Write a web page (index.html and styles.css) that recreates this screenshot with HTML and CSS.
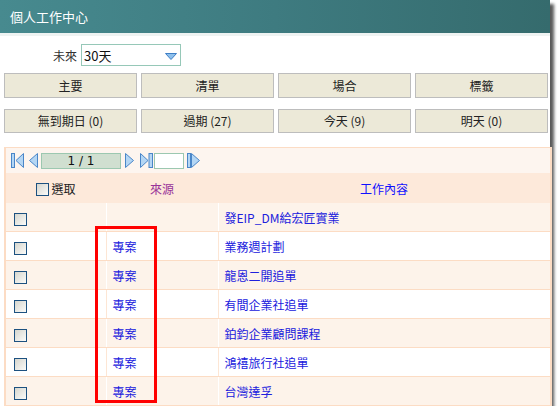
FILE: index.html
```html
<!DOCTYPE html>
<html lang="zh-Hant">
<head>
<meta charset="utf-8">
<link rel="stylesheet" href="styles.css">
</head>
<body>
<div class="panel">
  <div class="title">個人工作中心</div>
  <div class="strip"></div>
  <div class="filter">
    <span class="label">未來</span>
    <div class="select"><span>30天</span>
      <svg class="arrow" width="12" height="7" viewBox="0 0 12 7"><path d="M0.5 0.5 H11.5 L6 6.5 Z" fill="#8ec0ec" stroke="#3f7fc6" stroke-width="1"/></svg>
    </div>
  </div>
  <div class="btnrow r1">
    <div class="btn">主要</div><div class="btn">清單</div><div class="btn">場合</div><div class="btn">標籤</div>
  </div>
  <div class="btnrow r2">
    <div class="btn">無到期日 (0)</div><div class="btn">過期 (27)</div><div class="btn">今天 (9)</div><div class="btn">明天 (0)</div>
  </div>
  <table class="grid">
    <colgroup><col class="w1"><col class="w2"><col class="w3"></colgroup>
    <tr class="pager"><td colspan="3">
      <div class="pg">
        <svg width="13" height="15" viewBox="0 0 13 15"><rect x="0.5" y="0.5" width="3" height="14" fill="#b4d6f4" stroke="#4a86c8"/><path d="M12.5 0.5 V14.5 L5 7.5 Z" fill="#b4d6f4" stroke="#4a86c8"/></svg>
        <svg class="g1" width="9" height="15" viewBox="0 0 9 15"><path d="M8.5 0.5 V14.5 L0.5 7.5 Z" fill="#b4d6f4" stroke="#4a86c8"/></svg>
        <div class="page">1 / 1</div>
        <svg class="g2" width="9" height="15" viewBox="0 0 9 15"><path d="M0.5 0.5 V14.5 L8.5 7.5 Z" fill="#b4d6f4" stroke="#4a86c8"/></svg>
        <svg class="g3" width="13" height="15" viewBox="0 0 13 15"><path d="M0.5 0.5 V14.5 L8 7.5 Z" fill="#b4d6f4" stroke="#4a86c8"/><rect x="9" y="0.5" width="3.5" height="14" fill="#b4d6f4" stroke="#4a86c8"/></svg>
        <div class="goto"></div>
        <svg class="g4" width="13" height="15" viewBox="0 0 13 15"><rect x="0.5" y="0.5" width="3" height="14" fill="#b4d6f4" stroke="#4a86c8"/><path d="M4.5 0.5 V14.5 L12.5 7.5 Z" fill="#b4d6f4" stroke="#4a86c8"/></svg>
      </div>
    </td></tr>
    <tr class="head">
      <th class="hsel"><span class="cb"></span>選取</th>
      <th class="hsrc">來源</th>
      <th class="hcnt">工作內容</th>
    </tr>
    <tr class="odd"><td class="c1"><span class="cb"></span></td><td class="c2"></td><td class="c3">發EIP_DM給宏匠實業</td></tr>
    <tr class="even"><td class="c1"><span class="cb"></span></td><td class="c2">專案</td><td class="c3">業務週計劃</td></tr>
    <tr class="odd"><td class="c1"><span class="cb"></span></td><td class="c2">專案</td><td class="c3">龍恩二開追單</td></tr>
    <tr class="even"><td class="c1"><span class="cb"></span></td><td class="c2">專案</td><td class="c3">有間企業社追單</td></tr>
    <tr class="odd"><td class="c1"><span class="cb"></span></td><td class="c2">專案</td><td class="c3">鉑鈞企業顧問課程</td></tr>
    <tr class="even"><td class="c1"><span class="cb"></span></td><td class="c2">專案</td><td class="c3">鴻禧旅行社追單</td></tr>
    <tr class="odd"><td class="c1"><span class="cb"></span></td><td class="c2">專案</td><td class="c3">台灣達孚</td></tr>
  </table>
  <div class="highlight"></div>
</div>
</body>
</html>
```
FILE: styles.css
```css
html, body {
  margin: 0;
  padding: 0;
  background: #ffffff;
}
body {
  font-family: "Noto Sans CJK TC", "Noto Sans", sans-serif;
  font-size: 12px;
  color: #333;
}
.panel {
  position: relative;
  width: 550px;
  height: 406px;
  background: #ffffff;
  box-shadow: 4px 4px 3px #5a5a5a;
}
.title {
  height: 33px;
  line-height: 33px;
  padding-left: 10px;
  color: #ffffff;
  font-size: 13px;
  background: linear-gradient(to right, #478a8f, #3e7b80 50%, #356b6d);
}
.strip {
  height: 3px;
  background: #eef3f2;
}
.filter {
  display: flex;
  align-items: center;
  margin-top: 8px;
  padding-left: 53px;
  height: 22px;
}
.label {
  width: 28px;
  color: #333;
}
.select {
  box-sizing: border-box;
  width: 100px;
  height: 22px;
  border: 1px solid #96c8b8;
  display: flex;
  align-items: center;
  justify-content: space-between;
  padding: 0 3px 0 2px;
  font-size: 13px;
  color: #111;
}
.arrow {
  margin-top: 3px;
}
.btnrow {
  display: flex;
  gap: 4px;
  padding-left: 4px;
}
.r1 { margin-top: 7px; }
.r2 { margin-top: 11px; }
.btn {
  box-sizing: border-box;
  width: 133px;
  background: #ece9d8;
  border: 1px solid #bdbdbd;
  text-align: center;
  color: #222;
}
.r1 .btn { height: 25px; line-height: 23px; }
.r2 .btn { height: 24px; line-height: 22px; }
.grid {
  margin-top: 14px;
  margin-left: 4px;
  width: 546px;
  border-collapse: collapse;
  table-layout: fixed;
  border: 2px solid #fcdcc4;
  border-top-width: 1px;
}
.w1 { width: 101px; }
.w2 { width: 112px; }
.w3 { width: 333px; }
.grid td, .grid th {
  padding: 0;
}
.pager td {
  height: 25px;
  background: #fdf5ef;
}
.pg {
  display: flex;
  align-items: center;
  padding-left: 5px;
}
.pg svg { display: block; }
.g1 { margin-left: 5px; }
.page {
  box-sizing: border-box;
  width: 80px;
  height: 16px;
  margin-left: 3px;
  background: #d0dfd0;
  border: 1px solid #9cc8b0;
  text-align: center;
  line-height: 14px;
  font-size: 12px;
  color: #111;
  font-family: "DejaVu Sans", sans-serif;
}
.g2 { margin-left: 4px; }
.g3 { margin-left: 6px; }
.goto {
  box-sizing: border-box;
  width: 30px;
  height: 16px;
  margin-left: 1px;
  background: #fff;
  border: 1px solid #9cc8b0;
}
.g4 { margin-left: 3px; }
.head th {
  height: 30px;
  background: #fde9da;
  font-weight: normal;
  text-align: center;
}
.hsel {
  color: #222;
}
.hsel .cb {
  vertical-align: -2px;
  margin-right: 2px;
}
.hsrc { color: #993399; }
.hcnt { color: #1010ff; }
.grid tr.odd td { background: #fdf3ea; }
.grid tr.even td { background: #ffffff; }
.grid tr.odd td, .grid tr.even td {
  height: 28px;
  border-bottom: 1px solid #fcdcc4;
  color: #2020dd;
}
.grid tr.odd .c1, .grid tr.odd .c2 { border-right: 1px solid #ffffff; }
.grid tr.even .c1, .grid tr.even .c2 { border-right: 1px solid #fde6d4; }
.c1 { padding-left: 8px !important; }
.c2 { padding-left: 6px !important; }
.c3 { padding-left: 6px !important; }
.cb {
  display: inline-block;
  box-sizing: border-box;
  width: 13px;
  height: 13px;
  border: 1px solid #1c5180;
  background: linear-gradient(135deg, #d6d6ce, #fbfbf9);
  vertical-align: middle;
}
.highlight {
  position: absolute;
  left: 95px;
  top: 226px;
  width: 56px;
  height: 171px;
  border: 3px solid #ff0000;
}
```
